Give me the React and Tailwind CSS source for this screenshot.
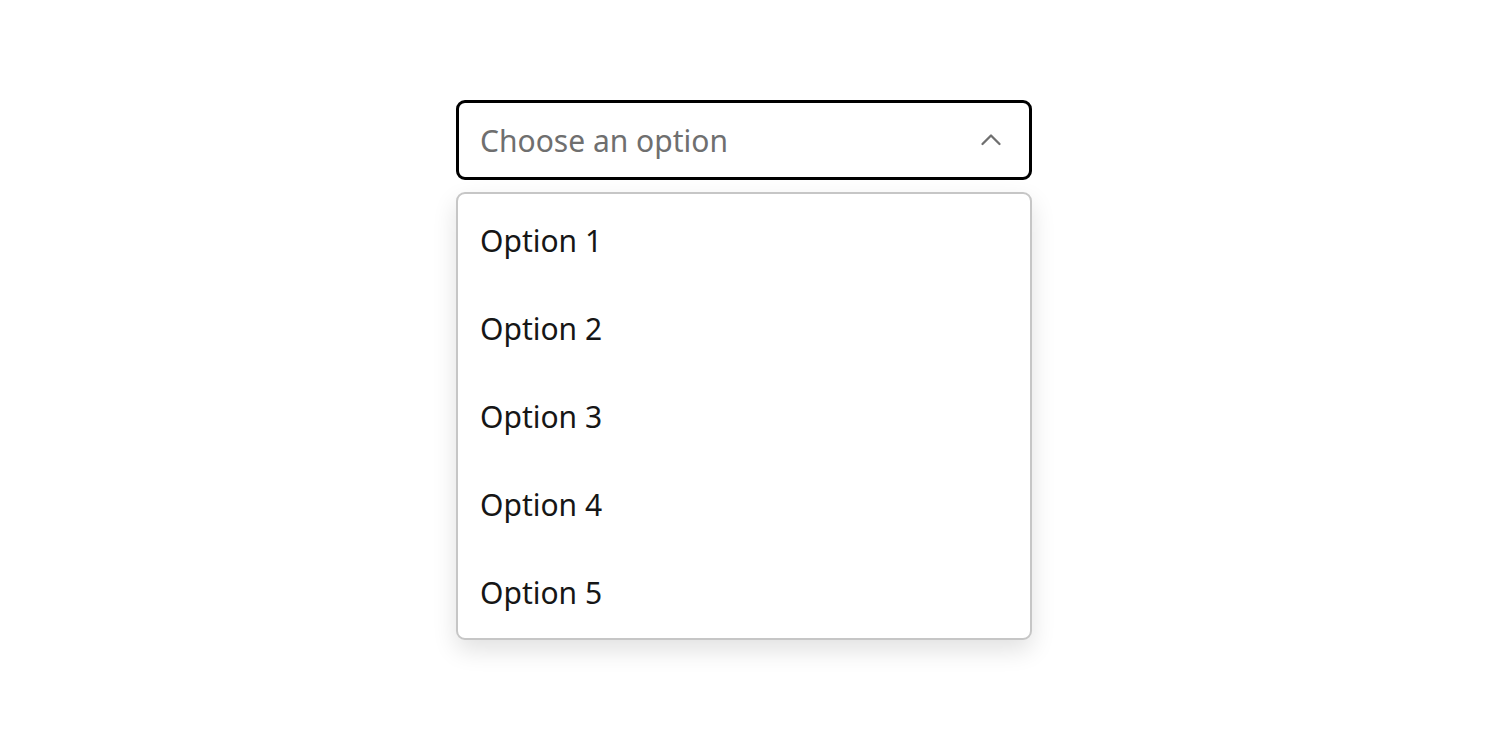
export default function App() {
  const options = ["Option 1", "Option 2", "Option 3", "Option 4", "Option 5"];

  return (
    <div
      className="min-h-screen bg-white flex justify-center pt-[100px]"
      style={{ fontFamily: "'Noto Sans', Inter, sans-serif" }}
    >
      <div className="w-[576px]">
        <button className="w-full h-[80px] flex items-center justify-between border-[3px] border-black rounded-[9px] pl-[21px] pr-[27px] bg-white">
          <span className="text-[30px] leading-none pt-[2px] text-[#6f6f6f]">Choose an option</span>
          <svg
            width="22"
            height="22"
            viewBox="0 0 22 22"
            fill="none"
            stroke="#6f6f6f"
            strokeWidth="2.3"
            strokeLinecap="round"
            strokeLinejoin="round"
          >
            <path d="M2.5 15l8.5-8.5 8.5 8.5" />
          </svg>
        </button>

        <ul className="mt-[12px] border-2 border-[#c6c6c6] rounded-[9px] bg-white py-[2px] shadow-[0_10px_24px_rgba(0,0,0,0.12)]">
          {options.map((opt) => (
            <li
              key={opt}
              className="h-[88px] flex items-center pl-[22px] pt-[2px] text-[30px] leading-none text-[#161616]"
            >
              {opt}
            </li>
          ))}
        </ul>
      </div>
    </div>
  );
}
